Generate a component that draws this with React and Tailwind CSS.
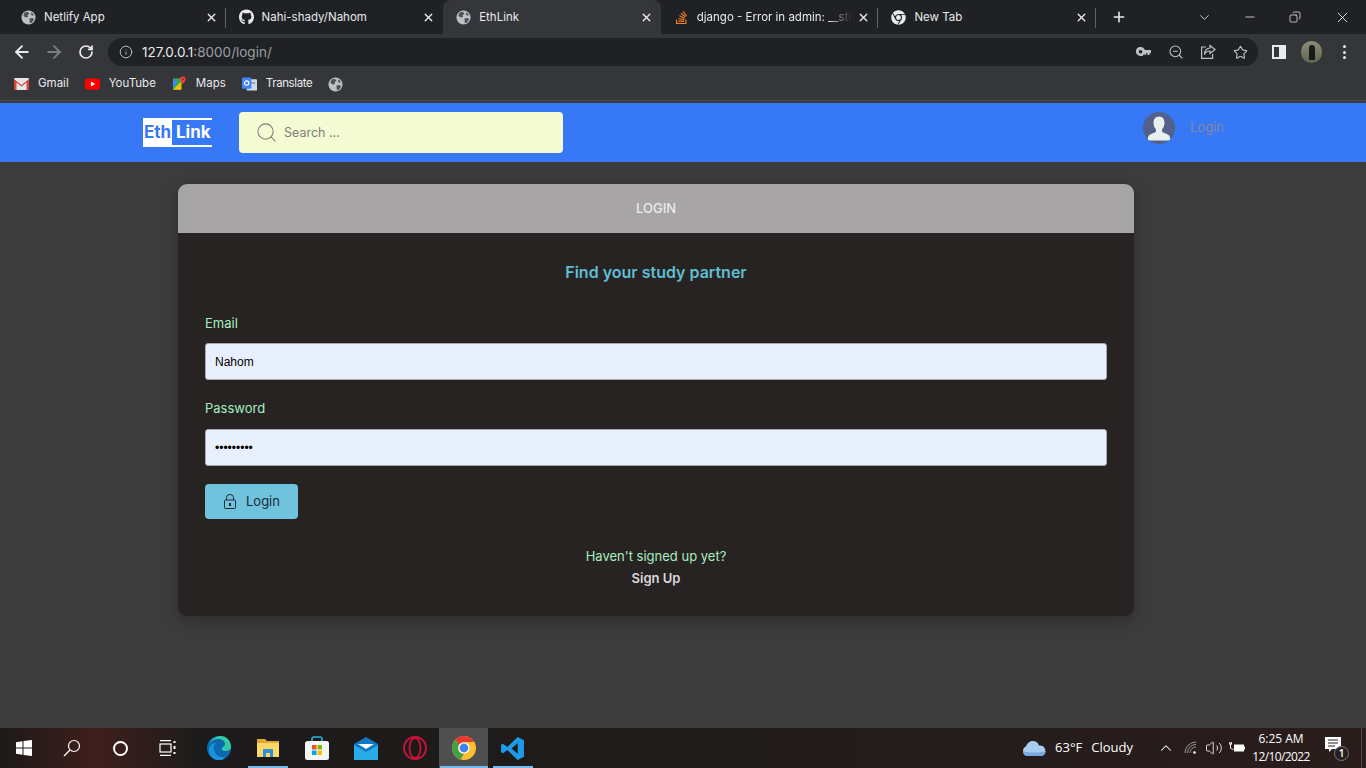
import React from "react";
import { FaGithub, FaStackOverflow, FaChrome } from "react-icons/fa";
import { ArrowLeft, ArrowRight, RotateCw, Info, ZoomOut, Star, Search, X, Plus, ChevronDown, Minus, Copy, ChevronUp, Volume2 } from "lucide-react";

const Globe = ({ s = 15 }) => (
  <svg width={s} height={s} viewBox="0 0 16 16" className="shrink-0">
    <circle cx="8" cy="8" r="7.5" fill="#bdc1c6" />
    <path d="M4 2.5 7.5 2 9 4 7 5.5 7.5 7.5 5 8 2.5 6ZM9 9l3.5-.5 1.5 1.5-2.5 3.5L9.500 14ZM10.500 2.500 13 4 13.500 6 11 5.500Z" fill="#4d5054" />
  </svg>
);

const Tab = ({ icon, title, active, fade, sep }) => (
  <div className={`w-[217.6px] h-[34px] shrink-0 flex items-center pl-[13px] pr-[7px] text-[11.5px] relative ${active ? "bg-[#35363a] rounded-t-[8px]" : ""}`}>
    <span className="w-[15px] h-[15px] flex items-center justify-center shrink-0">{icon}</span>
    <span className={`ml-[8px] pt-[1px] flex-1 whitespace-nowrap overflow-hidden text-[#e8eaed] ${fade ? "[mask-image:linear-gradient(to_right,black_85%,transparent)]" : ""}`}>{title}</span>
    <X size={13} strokeWidth={2.6} className="text-[#e8eaed] ml-[5px] mr-[1px] shrink-0" />
    {sep && <span className="absolute right-0 top-[8px] h-[20px] w-px bg-[#5f6368]" />}
  </div>
);

const Mark = ({ icon, label, cls = "" }) => (
  <div className={`flex items-center gap-[9px] text-[11.5px] text-[#e8eaed] ${cls}`}>
    <span className="w-[15px] h-[16px] flex items-center justify-center">{icon}</span>
    {label && <span>{label}</span>}
  </div>
);

const TaskCell = ({ children, active, under }) => (
  <div className={`w-[49px] h-[40px] flex items-center justify-center relative ${active ? "bg-[#4f4f4f]" : ""}`}>
    {children}
    {under && <span className={`absolute bottom-0 h-[2px] bg-[#76b9ed] ${active ? "left-[1px] right-0" : "left-[5px] right-[4px]"}`} />}
  </div>
);

const TaskSmall = ({ children }) => <div className="w-[48px] h-[40px] flex items-center justify-center">{children}</div>;

const Field = ({ label, type, value, tight }) => (
  <div className="flex flex-col">
    <label className={`text-[13px] leading-[20px] text-[#a7eec0] ${tight ? "-mt-px" : ""}`}>{label}</label>
    <input
      readOnly
      type={type}
      value={value}
      className={`${tight ? "mt-[11px]" : "mt-[10px]"} h-[37px] w-full rounded-[3px] border border-[#a9a9a9] bg-[#e8f0fe] px-[9px] text-[12px] text-black font-['Liberation_Sans',sans-serif] outline-none`}
    />
  </div>
);

export default function App() {
  return (
    <div className="w-[1366px] h-[768px] overflow-hidden flex flex-col bg-[#3c3c3c] font-['Inter',sans-serif]">
      {/* tab strip */}
      <div className="h-[34px] bg-[#202124] flex items-center pl-[8px] shrink-0 relative">
        <Tab icon={<Globe />} title="Netlify App" sep />
        <Tab icon={<FaGithub size={16} className="text-[#e8eaed]" />} title="Nahi-shady/Nahom" />
        <Tab icon={<Globe />} title="EthLink" active />
        <Tab icon={<FaStackOverflow size={15} className="text-[#f48024]" />} title="django - Error in admin: __str" fade sep />
        <Tab icon={<FaChrome size={15} className="text-[#e8eaed]" />} title="New Tab" sep />
        <Plus size={16} strokeWidth={2.4} className="text-[#e8eaed] ml-[15px]" />
        <div className="ml-auto flex items-center text-[#e8eaed]">
          <ChevronDown size={15} strokeWidth={1.3} className="mr-[31px]" />
          <Minus size={14} strokeWidth={1.4} className="mr-[32px]" />
          <Copy size={12} strokeWidth={1.5} className="mr-[33px] -scale-x-100" />
          <X size={17} strokeWidth={1.3} className="mr-[15px]" />
        </div>
      </div>
      {/* toolbar */}
      <div className="h-[36px] bg-[#35363a] flex items-center shrink-0">
        <ArrowLeft size={20} strokeWidth={2.2} className="text-[#e8eaed] ml-[12px]" />
        <ArrowRight size={20} strokeWidth={2.2} className="text-[#7b7e82] ml-[12px]" />
        <RotateCw size={16} strokeWidth={2.6} className="text-[#e8eaed] ml-[14px]" />
        <div className="ml-[14px] w-[1150px] h-[28px] rounded-full bg-[#202124] flex items-center pl-[11px]">
          <Info size={14} strokeWidth={1.6} className="text-[#bdc1c6]" />
          <span className="ml-[9px] text-[13.5px] text-[#e8eaed]">127.0.0.1<span className="text-[#9aa0a6]">:8000/login/</span></span>
          <div className="ml-auto flex items-center text-[#bdc1c6]">
            <svg width="15" height="10" viewBox="0 0 15 10" fill="#bdc1c6">
              <path d="M4.500 0a4.500 4.500 0 0 1 4.300 3H15v3.200h-1.500V8h-2V6.200H10V8H8.500V6.400A4.500 4.500 0 1 1 4.500 0Zm0 3a1.800 1.800 0 1 0 0 3.600 1.800 1.800 0 0 0 0-3.600Z" />
            </svg>
            <ZoomOut size={16} strokeWidth={1.6} className="ml-[17px]" />
            <svg width="16" height="16" viewBox="0 0 16 16" fill="none" stroke="#bdc1c6" strokeWidth="1.2" className="ml-[16px]">
              <path d="M6 3H1.600v11.400h11V10" />
              <path d="M10 1.500 15 5.500 10 9.500V7C7.500 7 5.500 8 4.500 10.500 4.500 7 6.500 4 10 4Z" />
            </svg>
            <Star size={15} strokeWidth={1.8} className="ml-[17px] mr-[10px]" />
          </div>
        </div>
        <div className="ml-[14px] w-[14px] h-[14px] border-[2px] border-[#e8eaed] flex justify-end"><span className="w-[5px] bg-[#e8eaed]" /></div>
        <div className="ml-[15px] w-[21px] h-[22px] rounded-full bg-gradient-to-b from-[#8b8f78] to-[#5f6650] flex items-center justify-center">
          <span className="w-[6px] h-[15px] rounded-t-full bg-[#1a1a18]" />
        </div>
        <div className="ml-[21px] flex flex-col gap-[2.500px]">
          <span className="w-[3px] h-[3px] rounded-full bg-[#e8eaed]" />
          <span className="w-[3px] h-[3px] rounded-full bg-[#e8eaed]" />
          <span className="w-[3px] h-[3px] rounded-full bg-[#e8eaed]" />
        </div>
      </div>
      {/* bookmarks */}
      <div className="h-[31px] pb-[2px] bg-[#35363a] flex items-center pl-[14px] gap-[16px] shrink-0 border-b border-[#4a4a4a]">
        <Mark label="Gmail" icon={
          <svg width="15" height="12" viewBox="0 0 15 12"><rect width="15" height="12" rx="1" fill="#e8e8e8" /><path d="M0 1 7.500 7 15 1V12H12.500V4.500L7.500 8.500 2.500 4.500V12H0Z" fill="#d44638" /></svg>
        } />
        <Mark label="YouTube" icon={
          <svg width="16" height="12" viewBox="0 0 16 12"><rect width="16" height="12" rx="3" fill="#f00" /><path d="M6.300 3.300 10.800 6 6.300 8.700Z" fill="#fff" /></svg>
        } />
        <Mark label="Maps" icon={
          <svg width="16" height="16" viewBox="0 0 16 16"><path d="M1 2h9v12H1Z" fill="#34a853" /><path d="M1 14 10 5v9Z" fill="#fbbc04" /><path d="M1 2 6 7 1 12Z" fill="#4285f4" /><path d="M11.500 0A3 3 0 0 1 14.500 3C14.500 5 11.500 8 11.500 8S8.500 5 8.500 3A3 3 0 0 1 11.500 0Z" fill="#ea4335" /><circle cx="11.500" cy="3" r="1" fill="#8b1a12" /></svg>
        } />
        <Mark label="Translate" cls="tracking-[-0.4px]" icon={
          <svg width="16" height="16" viewBox="0 0 16 16"><rect x="5" y="3" width="11" height="12" rx="1" fill="#cfd8e6" /><rect y="1" width="10" height="12" rx="1" fill="#4285f4" /><circle cx="5" cy="7" r="2.300" fill="none" stroke="#fff" strokeWidth="1.200" /><path d="M10 7h4" stroke="#5f6368" strokeWidth="1" /></svg>
        } />
        <Mark icon={<Globe />} />
      </div>
      <div className="h-[2px] bg-[#3c3c3c] shrink-0" />
      {/* site nav */}
      <div className="h-[59px] bg-[#3778f6] shrink-0 flex items-start pl-[143px]">
        <div className="mt-[15px] flex h-[29px] font-bold text-[17px] leading-[25px] border-y-[2px] border-white w-[69px] bg-[#3778f6]">
          <span className="bg-white text-[#3778f6] w-[29px] h-[29px] -mt-[2px] pt-[2px] text-center">Eth</span>
          <span className="text-white ml-[4px]">Link</span>
        </div>
        <div className="ml-[27px] mt-[9px] w-[324px] h-[41px] rounded-[4px] bg-[#f5fbd3] flex items-center pl-[16px] text-[#807f7a]">
          <Search size={23} strokeWidth={1.1} />
          <span className="ml-[6px] pt-[1px] text-[12.5px]">Search ...</span>
        </div>
        <div className="ml-[580px] mt-[9px] w-[32px] h-[32px] rounded-full bg-[#53618a] overflow-hidden">
          <svg width="32" height="32" viewBox="0 0 32 32"><path d="M16 4.500c3.600 0 5.500 2.800 5.500 6.200 0 2.600-1 5-2.400 6.300v2.500c0 1 4.400 2 6.500 3.500 1 .7 1.500 2 1.900 5.500H4.500c.4-3.500.9-4.800 1.900-5.500 2.100-1.500 6.500-2.500 6.500-3.500V17c-1.400-1.300-2.400-3.700-2.400-6.300 0-3.400 1.900-6.200 5.500-6.200Z" fill="#e9f1f0" /></svg>
        </div>
        <span className="ml-[15px] mt-[14px] text-[13px] leading-[20px] text-[#8389a0]">Login</span>
      </div>
      {/* page body */}
      <div className="flex-1 pt-[22px] pl-[178px]">
        <div className="w-[956px] h-[432px] rounded-[9px] overflow-hidden bg-[#272322] shadow-[0_4px_16px_rgba(0,0,0,0.25)]">
          <div className="h-[49px] bg-[#a7a5a5] flex items-center justify-center text-[13px] font-medium text-[#ececec]">LOGIN</div>
          <div className="px-[27px] pt-[28px]">
            <h2 className="text-center text-[16px] leading-[22px] font-semibold text-[#5fbdd4]">Find your study partner</h2>
            <div className="mt-[30px] flex flex-col gap-[19px]">
              <Field label="Email" type="text" value="Nahom" />
              <Field label="Password" type="password" value="Nahom1234" tight />
            </div>
            <button className="mt-[18px] w-[93px] h-[35px] rounded-[4px] bg-[#6fc3dd] flex items-center pl-[19px] text-[13px] text-[#1c2a3a]">
              <svg width="12" height="15" viewBox="0 0 12 15" fill="none" stroke="#1c2a3a" strokeWidth="1">
                <path d="M2.500 6V3.500a3.500 3 0 0 1 7 0V6" />
                <rect x="0.500" y="6" width="11" height="8.500" rx="0.800" />
                <rect x="5" y="9" width="2" height="3" fill="#1c2a3a" stroke="none" />
              </svg>
              <span className="ml-[10px]">Login</span>
            </button>
            <p className="mt-[26px] text-center text-[13px] leading-[22px] text-[#a7eec0]">Haven't signed up yet?</p>
            <p className="text-center text-[13px] leading-[22px] font-semibold text-[#d9d9d9]">Sign Up</p>
          </div>
        </div>
      </div>
      {/* taskbar */}
      <div className="h-[40px] shrink-0 flex items-center text-white bg-gradient-to-r from-[#1b1a1a] via-[#1f1b1a] to-[#2a1d1c] font-['Open_Sans',sans-serif] relative">
        <div className="flex items-center bg-gradient-to-r from-[#1c1918] via-[#3f1e1b] to-[#1e1c1b]">
          <TaskSmall>
            <svg width="16" height="16" viewBox="0 0 16 16" fill="#fff"><path d="M0 2.300 6.500 1.300V7.500H0ZM7.500 1.100 16 0V7.500H7.500ZM0 8.500H6.500V14.700L0 13.700ZM7.500 8.500H16V16L7.500 14.900Z" /></svg>
          </TaskSmall>
          <TaskSmall>
            <svg width="18" height="18" viewBox="0 0 18 18" fill="none" stroke="#fff" strokeWidth="1.200"><circle cx="11" cy="7" r="5.500" /><path d="M7 11 1 17" /></svg>
          </TaskSmall>
          <TaskSmall><span className="w-[15px] h-[15px] rounded-full border-[2px] border-white" /></TaskSmall>
          <TaskSmall>
            <svg width="18" height="16" viewBox="0 0 18 16" fill="none" stroke="#fff" strokeWidth="1.200"><path d="M1 .6h11M1 15.400h11" /><rect x="1" y="4" width="11" height="8" /><path d="M15.500 1v2M15.500 6v3M15.500 12v2" strokeWidth="2" /></svg>
          </TaskSmall>
        </div>
        <div className="w-[2px]" />
        <TaskCell>
          <svg width="24" height="24" viewBox="0 0 24 24"><circle cx="12" cy="12" r="12" fill="#0c68b0" /><path d="M2 9C4 2 10 0 14 0c5 0 10 4 10 11 0 3-3 4-6 4-2 0-3-1-3-2 0-3 3-2 3-5 0-3-3-5-7-5-5 0-8 3-9 6Z" fill="#35c9a6" /><path d="M14 24c-6 1-12-3-12-10 0-4 3-7 7-7-2 2-3 4-2 7 1 5 6 8 11 7-1 1-2 3-4 3Z" fill="#1a93dd" /></svg>
        </TaskCell>
        <TaskCell under>
          <svg width="22" height="18" viewBox="0 0 22 18"><path d="M0 0h8l2 2h12v3H0Z" fill="#dfa73a" /><rect y="4" width="22" height="14" fill="#fbd76a" /><rect x="6" y="10" width="10" height="8" fill="#2e8fd6" /><rect x="9" y="14" width="4" height="4" fill="#fbd76a" /></svg>
        </TaskCell>
        <TaskCell>
          <svg width="24" height="24" viewBox="0 0 24 24"><path d="M7 6V3c0-1 1-2 2-2h6c1 0 2 1 2 2v3" fill="none" stroke="#26b5d9" strokeWidth="1.600" /><rect y="5" width="24" height="19" rx="2.500" fill="#f5f5f5" /><rect x="7" y="9" width="4.500" height="4.500" fill="#f25022" /><rect x="12.500" y="9" width="4.500" height="4.500" fill="#7fba00" /><rect x="7" y="14.500" width="4.500" height="4.500" fill="#00a4ef" /><rect x="12.500" y="14.500" width="4.500" height="4.500" fill="#ffb900" /></svg>
        </TaskCell>
        <TaskCell>
          <svg width="24" height="23" viewBox="0 0 24 23"><path d="M12 0 24 7v16H0V7Z" fill="#0f78c8" /><path d="M0 8 12 15 24 8V23H0Z" fill="#29abe8" /><path d="M4 7h16l-8 5Z" fill="#fff" /></svg>
        </TaskCell>
        <TaskCell>
          <svg width="24" height="24" viewBox="0 0 24 24" fill="none" stroke="#c8143c"><circle cx="12" cy="12" r="11" strokeWidth="1.800" /><ellipse cx="12" cy="12" rx="5.500" ry="10" strokeWidth="1.800" /></svg>
        </TaskCell>
        <TaskCell active under>
          <svg width="24" height="24" viewBox="0 0 24 24"><circle cx="12" cy="12" r="12" fill="#fbc02d" /><path d="M12 0A12 12 0 0 1 22.400 6H12A6 6 0 0 0 6.800 9L3.300 3.700A12 12 0 0 1 12 0Z" fill="#e53935" /><path d="M3.300 3.700 6.800 9A6 6 0 0 0 12 18L8.500 23.500A12 12 0 0 1 3.300 3.700Z" fill="#43a047" /><circle cx="12" cy="12" r="5.600" fill="#fff" /><circle cx="12" cy="12" r="4.400" fill="#3e82f1" /></svg>
        </TaskCell>
        <TaskCell under>
          <svg width="25" height="25" viewBox="0 0 24 24"><path d="M17 1 23 4V20L17 23 7 13.500 3 16.500 1 15.500V8.500L3 7.500 7 10.500ZM17 7 11 12 17 17Z" fill="#1e9be8" /></svg>
        </TaskCell>
        <div className="ml-auto flex items-center">
          <svg width="25" height="16" viewBox="0 0 25 16"><path d="M5 16a5 5 0 0 1-1-9.500C5 3 8 1 11 1c3 0 5 1.500 6 4.500a5.300 5.300 0 0 1 2 10.500Z" fill="#a9cdf0" /><path d="M1 11c6 2 16 2 23 0-.5 3-2.500 5-5 5H5c-2 0-3.500-2-4-5Z" fill="#77a9e0" /></svg>
          <span className="ml-[8px] text-[13px]">63°F</span>
          <span className="ml-[9px] text-[13px]">Cloudy</span>
          <ChevronUp size={18} strokeWidth={1.4} className="ml-[24px]" />
          <svg width="14" height="14" viewBox="0 0 14 14" fill="none" stroke="#9a9a9a" strokeWidth="1" className="ml-[9px]"><path d="M1 12a11 11 0 0 1 11-11M3.500 12A8.500 8.500 0 0 1 12 3.500M6 12a6 6 0 0 1 6-6" /><circle cx="10.500" cy="11.500" r="1.300" fill="#fff" stroke="none" /></svg>
          <Volume2 size={18} strokeWidth={1.1} className="ml-[7px]" />
          <svg width="17" height="14" viewBox="0 0 17 14" className="ml-[5px]"><rect x="6" y="3.500" width="10" height="7" fill="#fff" /><rect x="16" y="5.500" width="1" height="3" fill="#fff" /><path d="M1 3h3M1.800 1v2M3.300 1v2M2.500 3v3a2 2 0 0 0 3 2" stroke="#fff" fill="none" /></svg>
          <div className="ml-[7px] flex flex-col items-center text-[12px] leading-[18px] w-[58px]">
            <span>6:25 AM</span>
            <span className="whitespace-nowrap tracking-[-0.6px]">12/10/2022</span>
          </div>
          <div className="ml-[15px] mr-[12px] w-[24px] h-[26px] relative">
            <svg width="16" height="16" viewBox="0 0 16 16" className="absolute left-0 top-[2px]" fill="#fff"><path d="M0 0h16v12H7l-3 3v-3H0Z" /><path d="M3 3h10M3 6h10M3 9h7" stroke="#222" /></svg>
            <span className="absolute right-0 bottom-0 w-[15px] h-[15px] rounded-full bg-[#262020] border border-[#777] text-[10px] leading-[13px] text-center font-semibold">1</span>
          </div>
          <div className="w-px h-[40px] bg-[#4a4a4a] mr-[4px]" />
        </div>
      </div>
    </div>
  );
}
